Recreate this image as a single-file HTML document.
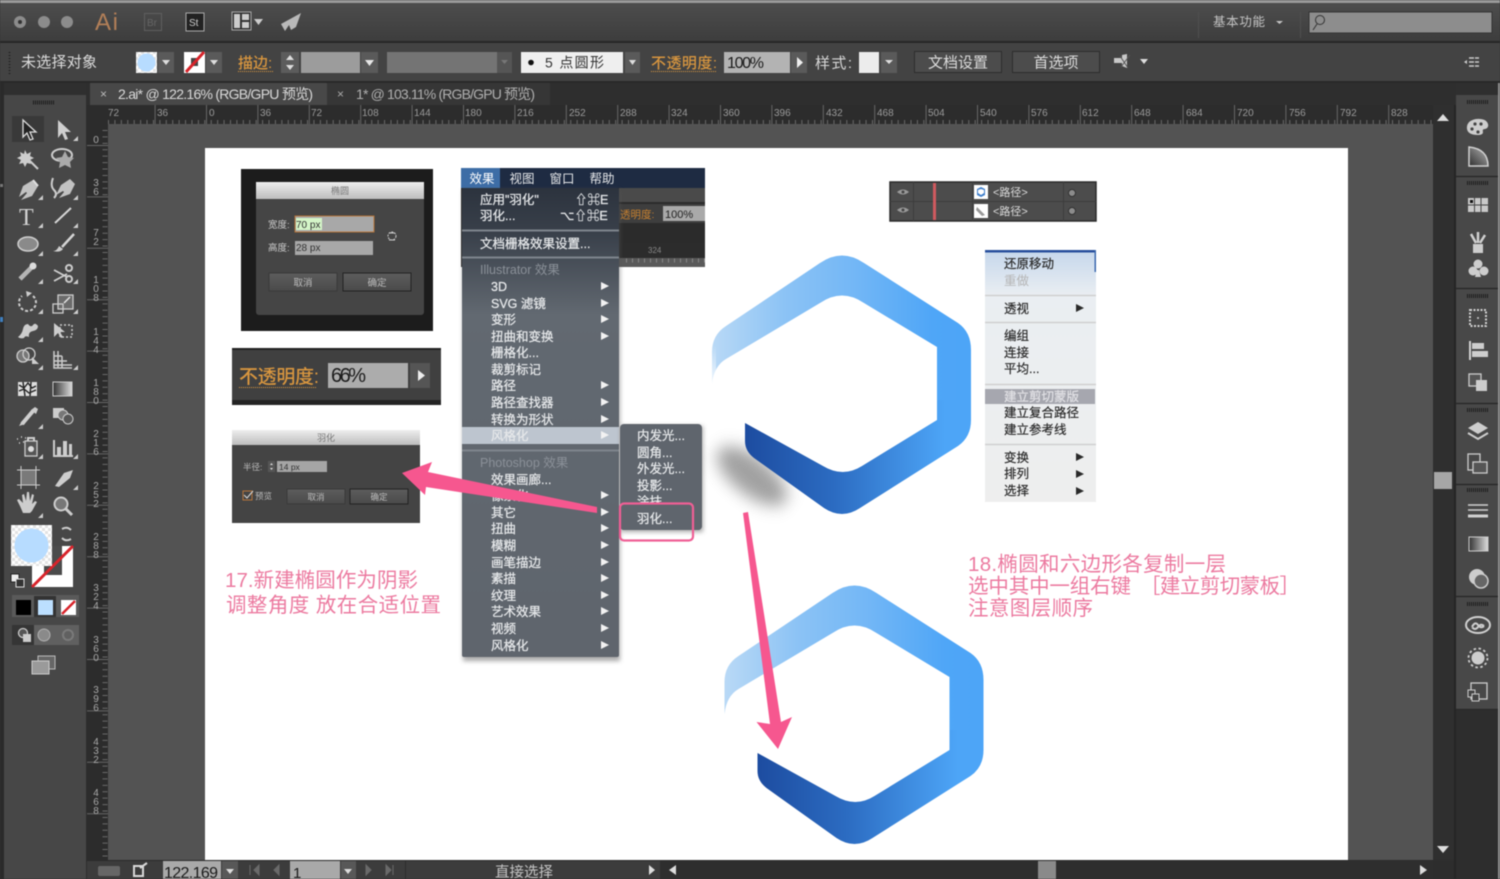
<!DOCTYPE html>
<html lang="zh"><head><meta charset="utf-8"><title>Illustrator</title>
<style>
html,body{margin:0;padding:0;background:#333;overflow:hidden}
svg{display:block;width:1500px;height:879px;filter:blur(.45px)}
text{font-family:"Liberation Sans","Noto Sans CJK SC",sans-serif}
.m{font-size:12.5px;fill:#e6e8ea;stroke:#e6e8ea;stroke-width:.25px}
.c{font-size:12.5px;fill:#2b2b2b;stroke:#2b2b2b;stroke-width:.2px}
.r{font-size:10px;fill:#9a9a9a}
.rv{font-size:10px;fill:#a8a8a8;text-anchor:middle}
.p{font-size:20.5px;fill:#ec7aa0}
.o{fill:#d8963f;font-weight:500}
.i{fill:#cdcdcd}
.s{fill:none;stroke:#cdcdcd;stroke-width:2}
</style></head><body>
<svg xmlns="http://www.w3.org/2000/svg" viewBox="0 0 1500 879" width="1500" height="879">
<defs>
<linearGradient id="top" x1="0" y1="0" x2="0" y2="1"><stop offset="0" stop-color="#4d4d4d"/><stop offset="1" stop-color="#3d3d3d"/></linearGradient>
<linearGradient id="hexA" gradientUnits="userSpaceOnUse" x1="712" y1="0" x2="971" y2="0"><stop offset="0" stop-color="#b9d9f6"/><stop offset=".28" stop-color="#8cc3f5"/><stop offset=".55" stop-color="#73b7f6"/><stop offset=".85" stop-color="#4fa6f7"/><stop offset="1" stop-color="#4da5f7"/></linearGradient>
<linearGradient id="hexB" gradientUnits="userSpaceOnUse" x1="745" y1="0" x2="945" y2="0"><stop offset="0" stop-color="#1d4ca0"/><stop offset=".45" stop-color="#2c6cc2"/><stop offset="1" stop-color="#4da5f7"/></linearGradient>
<linearGradient id="fade" gradientUnits="userSpaceOnUse" x1="0" y1="345" x2="0" y2="395"><stop offset="0" stop-color="#fff" stop-opacity="0"/><stop offset="1" stop-color="#fff"/></linearGradient>
<linearGradient id="menu" x1="0" y1="0" x2="0" y2="1"><stop offset="0" stop-color="#2c333e"/><stop offset=".1" stop-color="#3a414b"/><stop offset=".27" stop-color="#626971"/><stop offset="1" stop-color="#5f656d"/></linearGradient>
<linearGradient id="ctx" x1="0" y1="0" x2="0" y2="1"><stop offset="0" stop-color="#c5d7ec"/><stop offset=".18" stop-color="#eaeef2"/><stop offset="1" stop-color="#eeeeee"/></linearGradient>
<linearGradient id="title" x1="0" y1="0" x2="0" y2="1"><stop offset="0" stop-color="#eeeeee"/><stop offset="1" stop-color="#bdbdbd"/></linearGradient>
<linearGradient id="btn" x1="0" y1="0" x2="0" y2="1"><stop offset="0" stop-color="#5d5d5d"/><stop offset="1" stop-color="#4a4a4a"/></linearGradient>
<linearGradient id="grd" x1="0" y1="0" x2="1" y2="0"><stop offset="0" stop-color="#333"/><stop offset="1" stop-color="#ddd"/></linearGradient>
<linearGradient id="wedge" x1="0" y1="1" x2="1" y2="0"><stop offset="0" stop-color="#2f2f2f"/><stop offset="1" stop-color="#b5b5b5"/></linearGradient>
<filter id="b9" x="-60%" y="-60%" width="220%" height="220%"><feGaussianBlur stdDeviation="8"/></filter>
<filter id="b2" x="-20%" y="-20%" width="140%" height="140%"><feGaussianBlur stdDeviation="2.5"/></filter>
<pattern id="chk" width="6" height="6" patternUnits="userSpaceOnUse"><rect width="6" height="6" fill="#fff"/><rect width="3" height="3" fill="#e2e2e2"/><rect x="3" y="3" width="3" height="3" fill="#e2e2e2"/></pattern>
</defs>

<!-- base -->
<rect width="1500" height="879" fill="#2d2d2d"/>
<rect width="1500" height="3" fill="#9a9a9a"/>
<rect y="3" width="1500" height="38" fill="url(#top)"/>
<rect y="41" width="1500" height="2" fill="#272727"/>
<rect y="43" width="1500" height="38" fill="#434343"/>
<rect y="81" width="1500" height="2" fill="#292929"/>
<rect y="83" width="1500" height="22" fill="#2e2e2e"/>

<!-- title bar -->
<circle cx="20" cy="22" r="6" fill="#8c8c8c"/><circle cx="20" cy="22" r="2" fill="#333"/>
<circle cx="44" cy="22" r="6" fill="#8c8c8c"/><circle cx="67" cy="22" r="6" fill="#8c8c8c"/>
<text x="95" y="30" font-size="24" fill="#b27f58" textLength="23">Ai</text>
<rect x="144.5" y="13.5" width="17" height="17" fill="none" stroke="#5f5f5f"/><text x="147" y="26" font-size="10" fill="#666">Br</text>
<rect x="186" y="13" width="18" height="18" fill="#222" stroke="#aaa"/><text x="189" y="26" font-size="10" fill="#ccc">St</text>
<rect x="232" y="12" width="19" height="18" fill="#333" stroke="#aaa"/><path d="M234 14h6v14h-6zM242 14h7v6h-7zM242 22h7v6h-7z" fill="#ccc"/><path d="M254 19h9l-4.500 6z" fill="#ccc"/>
<path d="M281 24l20-11-5 14-5 3-2-5-4 6z" fill="#b9b9b9"/>
<path d="M1198.5 12v26M1300.5 12v26" stroke="#4f4f4f"/>
<text x="1213" y="26" font-size="12.500" fill="#c4c4c4" textLength="52">基本功能</text><path d="M1276 21h7l-3.500 3z" fill="#c4c4c4"/>
<rect x="1309" y="12" width="183" height="21" fill="#8d8d8d" stroke="#333"/>
<circle cx="1320" cy="20" r="4.500" fill="none" stroke="#333"/><path d="M1317 24l-4 6" stroke="#333"/>

<!-- control bar -->
<path d="M9.5 52v22" stroke="#222" stroke-dasharray="1 2" stroke-width="2"/>
<text x="21" y="67" font-size="15" fill="#dcdcdc" textLength="76">未选择对象</text>
<rect x="136" y="52" width="21" height="21" fill="url(#chk)"/><circle cx="146.5" cy="62.5" r="9" fill="#b7dcff"/>
<rect x="158" y="52" width="16" height="21" fill="#5a5a5a"/><path d="M162 60h8l-4 5z" fill="#ddd"/>
<rect x="184" y="52" width="21" height="21" fill="#fff"/><rect x="191" y="58" width="7" height="8" fill="#444"/><path d="M186 72l18-20" stroke="#d8232a" stroke-width="3"/>
<rect x="206" y="52" width="16" height="21" fill="#5a5a5a"/><path d="M210 60h8l-4 5z" fill="#ddd"/>
<text x="238" y="68" font-size="15" class="o">描边:</text><path d="M238 71.5h35" stroke="#d8963f" stroke-dasharray="1 1"/>
<rect x="281" y="52" width="18" height="21" fill="#5c5c5c"/><path d="M286 60l4-5 4 5zM286 65l4 5 4-5z" fill="#ddd"/>
<rect x="301" y="52" width="59" height="21" fill="#9c9c9c"/>
<rect x="361" y="52" width="17" height="21" fill="#5a5a5a"/><path d="M365 60h9l-4.500 6z" fill="#e6e6e6"/>
<rect x="387" y="52" width="110" height="21" fill="#747474"/><rect x="497" y="52" width="15" height="21" fill="#555"/><path d="M501 60h7l-3.500 4z" fill="#777"/>
<rect x="521" y="52" width="102" height="21" fill="#efefef"/><circle cx="531" cy="62.5" r="2.800" fill="#111"/>
<text x="545" y="67.5" font-size="14" fill="#333" textLength="59">5 点圆形</text>
<rect x="625" y="52" width="15" height="21" fill="#5a5a5a"/><path d="M629 60h7l-3.500 5z" fill="#ddd"/>
<text x="651" y="68" font-size="15" class="o" textLength="66">不透明度:</text><path d="M651 71.5h65" stroke="#d8963f" stroke-dasharray="1 1"/>
<rect x="724" y="52" width="66" height="21" fill="#b3b3b3"/><text x="727" y="68" font-size="16" fill="#1c1c1c" textLength="37">100%</text>
<rect x="791" y="52" width="16" height="21" fill="#5a5a5a"/><path d="M797 57l6 5.500-6 5.500z" fill="#eee"/>
<text x="815" y="68" font-size="15" fill="#d8d8d8" textLength="37">样式:</text>
<rect x="859" y="52" width="20" height="21" fill="#ececec"/>
<rect x="881" y="52" width="16" height="21" fill="#5a5a5a"/><path d="M885 60h8l-4 4z" fill="#ddd"/>
<rect x="914.5" y="51.5" width="87" height="21" fill="#4c4c4c" stroke="#2d2d2d"/><text x="958" y="67.5" font-size="15" fill="#dcdcdc" text-anchor="middle">文档设置</text>
<rect x="1012.5" y="51.5" width="87" height="21" fill="#4c4c4c" stroke="#2d2d2d"/><text x="1056" y="67.5" font-size="15" fill="#dcdcdc" text-anchor="middle">首选项</text>
<path d="M1114 58h8v-3l5 -1v14l-5-2v-3h-8z" fill="#c8c8c8"/><path d="M1120 56l8 12M1130 55l-9 12" stroke="#555"/>
<path d="M1140 59h8l-4 5z" fill="#ddd"/>
<path d="M1469 58h10M1469 62h10M1469 66h10" stroke="#ccc" stroke-width="1.500" stroke-dasharray="5 1"/><path d="M1464 62l3-2v4z" fill="#ccc"/>

<!-- tabs -->
<text x="9" y="92" font-size="10" fill="#bbb">‹‹</text>
<rect x="90" y="83" width="237" height="22" fill="#484848"/>
<rect x="327" y="83" width="223" height="22" fill="#363636"/>
<text x="100" y="98" font-size="12" fill="#bbb">×</text>
<text x="118" y="99" font-size="14" fill="#dadada" textLength="195">2.ai* @ 122.16% (RGB/GPU 预览)</text>
<text x="337" y="98" font-size="12" fill="#aaa">×</text>
<text x="356" y="99" font-size="14" fill="#b0b0b0" textLength="179">1* @ 103.11% (RGB/GPU 预览)</text>
<text x="1483" y="92" font-size="10" fill="#bbb">‹‹</text>

<!-- canvas -->
<rect x="108" y="125" width="1325" height="735" fill="#535353"/>
<rect x="205" y="148" width="1143" height="712" fill="#fff"/>

<!-- horizontal ruler -->
<rect x="87" y="105" width="1346" height="20" fill="#2c2c2c"/>
<path d="M103.2 115H1432" stroke="#666" stroke-width="20" stroke-dasharray="1 50.400"/>
<path d="M108 122.5H1432" stroke="#6a6a6a" stroke-width="5" stroke-dasharray="1 5.420"/>
<rect x="87" y="124" width="1346" height="1" fill="#555"/>
<g class="r">
<text x="108" y="116" class="r">72</text><text x="157" y="116" class="r">36</text><text x="209" y="116" class="r">0</text><text x="260" y="116" class="r">36</text><text x="311" y="116" class="r">72</text><text x="362" y="116" class="r">108</text><text x="414" y="116" class="r">144</text><text x="465" y="116" class="r">180</text><text x="517" y="116" class="r">216</text><text x="569" y="116" class="r">252</text><text x="620" y="116" class="r">288</text><text x="671" y="116" class="r">324</text><text x="723" y="116" class="r">360</text><text x="774" y="116" class="r">396</text><text x="826" y="116" class="r">432</text><text x="877" y="116" class="r">468</text><text x="928" y="116" class="r">504</text><text x="980" y="116" class="r">540</text><text x="1031" y="116" class="r">576</text><text x="1082" y="116" class="r">612</text><text x="1134" y="116" class="r">648</text><text x="1186" y="116" class="r">684</text><text x="1237" y="116" class="r">720</text><text x="1289" y="116" class="r">756</text><text x="1340" y="116" class="r">792</text><text x="1391" y="116" class="r">828</text>
</g>

<!-- vertical ruler -->
<rect x="87" y="105" width="21" height="755" fill="#2c2c2c"/>
<path d="M97.5 145V860" stroke="#666" stroke-width="21" stroke-dasharray="1 50.400"/>
<path d="M105 130V860" stroke="#6a6a6a" stroke-width="5" stroke-dasharray="1 5.420"/>
<text class="rv" x="96" y="143">0</text>
<text class="rv" x="96 96" y="186 195">36</text>
<text class="rv" x="96 96" y="236 245">72</text>
<text class="rv" x="96 96 96" y="283 292 301">108</text>
<text class="rv" x="96 96 96" y="335 344 353">144</text>
<text class="rv" x="96 96 96" y="386 395 404">180</text>
<text class="rv" x="96 96 96" y="437 446 455">216</text>
<text class="rv" x="96 96 96" y="489 498 507">252</text>
<text class="rv" x="96 96 96" y="540 549 558">288</text>
<text class="rv" x="96 96 96" y="591 600 609">324</text>
<text class="rv" x="96 96 96" y="643 652 661">360</text>
<text class="rv" x="96 96 96" y="693 702 711">396</text>
<text class="rv" x="96 96 96" y="745 754 763">432</text>
<text class="rv" x="96 96 96" y="796 805 814">468</text>

<!-- tool panel -->
<rect x="0" y="83" width="4" height="796" fill="#2a2a2a"/>
<rect x="0" y="317" width="3" height="5" fill="#3f7fc0"/>
<rect x="0" y="184" width="3" height="3" fill="#777"/>
<rect x="4" y="95" width="82" height="784" fill="#474747"/>
<rect x="4" y="83" width="82" height="12" fill="#2f2f2f"/>
<path d="M33 102.5h22" stroke="#1d1d1d" stroke-width="4" stroke-dasharray="1 1"/>
<rect x="12" y="116" width="32" height="26" fill="#393939"/>
<!-- flyout triangles -->
<path class="i" d="M73 141l5-5v5zM38 200l5-5v5zM73 200l5-5v5zM38 228l5-5v5zM73 228l5-5v5zM38 256l5-5v5zM73 256l5-5v5zM38 284l5-5v5zM73 284l5-5v5zM38 314l5-5v5zM73 314l5-5v5zM38 342l5-5v5zM38 370l5-5v5zM73 370l5-5v5zM38 429l5-5v5zM38 459l5-5v5zM73 459l5-5v5zM73 490l5-5v5zM38 518l5-5v5z"/>
<!-- selection / direct -->
<path d="M23 120v17l4-4 3 7 3-1-3-7h6z" fill="#222" stroke="#ddd" stroke-width="1.300"/>
<path d="M58 120v18l4-5 3 7 3-1-3-7h6z" fill="#cfcfcf"/>
<!-- wand / lasso -->
<path class="i" d="M25 150l2 4 4-2-1 4 4 2-4 2 1 4-4-1-2 4-2-4-4 1 2-4-4-2 4-2-1-4 4 2z"/><path d="M29 160l9 9" stroke="#cdcdcd" stroke-width="2"/>
<ellipse class="s" cx="62" cy="155" rx="10" ry="6"/><path fill="#aaa" d="M65 151l3 6 6 1-4 4 1 6-6-3-6 3 1-6-4-4 6-1z"/>
<!-- pen / curvature -->
<path fill="#c2c2c2" d="M19 197l4-11 10-6 5 6-6 10-11 4 6-7-1-1z"/><path d="M33 180l5 6" stroke="#e0e0e0" stroke-width="2"/>
<path fill="#c2c2c2" d="M56 195l5-10 9-6 5 5-5 10-11 4 5-6-1-1z"/><path d="M53 178q-3 8 1 12t0 8" class="s" stroke-width="1.500"/>
<!-- type / line -->
<text x="19" y="225" font-size="24" fill="#d2d2d2" style="font-family:'Liberation Serif',serif">T</text>
<path d="M55 223l16-15" stroke="#d5d5d5" stroke-width="2"/>
<!-- ellipse / brush -->
<ellipse cx="28" cy="244" rx="10" ry="7" fill="#8a8a8a" stroke="#d0d0d0" stroke-width="1.500"/>
<path d="M74 234l-12 13" stroke="#d5d5d5" stroke-width="2.500"/><path class="i" d="M53 251q4 0 6-5l4 3q-3 4-10 2z"/>
<!-- pencil / scissors -->
<path d="M33 266l-13 13" stroke="#b5b5b5" stroke-width="4.500"/><circle cx="33" cy="266" r="3.500" fill="#ddd"/>
<path d="M54 270l13 7M54 281l13-7" stroke="#cfcfcf" stroke-width="1.800"/><circle cx="69" cy="268" r="3" class="s" stroke-width="1.500"/><circle cx="69" cy="279" r="3" class="s" stroke-width="1.500"/>
<!-- rotate / scale -->
<path d="M33 296a8.500 8.500 0 1 1-11 0" class="s" stroke-dasharray="3 2"/><path class="i" d="M26 291l6 2-5 4z"/>
<rect x="58" y="295" width="15" height="14" fill="#6b6b6b" stroke="#cdcdcd" stroke-width="1.300"/><rect x="53" y="304" width="10" height="9" fill="none" stroke="#cdcdcd" stroke-width="1.300"/><path d="M64 303l6-6" stroke="#e4e4e4" stroke-width="1.500"/>
<!-- warp / free transform -->
<path d="M18 337q4-3 5-8t5-5q3 4 5 1t5 1q0 4-5 5t-4 6q-4-2-5 1-4 1-6-1z" class="i"/>
<path d="M54 323v14l4-4 3 5 2-1-3-5h5z" class="i"/><rect x="60" y="325" width="12" height="12" fill="none" stroke="#cdcdcd" stroke-dasharray="2 2" stroke-width="1.500"/>
<!-- builder / perspective -->
<circle cx="23" cy="356" r="6" fill="#777" stroke="#ccc" stroke-width="1.300"/><circle cx="29" cy="354" r="6" fill="none" stroke="#ccc" stroke-width="1.300"/><path class="i" d="M32 357l7 7h-7z"/>
<path d="M54 351v17h18M58 351v17M62 356v12M54 356h8M54 361h13M54 365h18" stroke="#cdcdcd" stroke-width="1.500" fill="none"/>
<!-- mesh / gradient -->
<rect x="18" y="382" width="19" height="14" fill="#ddd"/><path d="M19 385l5 3 4-5 4 5 4-2M19 391l5-2 5 4 7-3M23 382l2 14M31 382l-1 14" stroke="#222" stroke-width="1.400" fill="none"/>
<rect x="53" y="382" width="19" height="14" fill="url(#grd)" stroke="#ccc"/>
<!-- eyedropper / blend -->
<path d="M22 424l11-13" stroke="#cfcfcf" stroke-width="4"/><path d="M19 426l3-5 3 3z" class="i"/><path d="M31 410l5 4 2-5-3-2z" class="i"/>
<rect x="53" y="408" width="11" height="10" class="i"/><circle cx="63" cy="415" r="5" fill="#777" stroke="#ccc"/><circle cx="68" cy="419" r="5" fill="#555" stroke="#ccc"/>
<!-- spray / graph -->
<rect x="25" y="441" width="12" height="15" fill="#555" stroke="#ccc" stroke-width="1.300"/><circle cx="31" cy="449" r="3" fill="#ddd"/><path d="M28 441v-3h6v3" class="s" stroke-width="1.300"/><path d="M17 439h1M21 437h1M25 438h1M19 443h1M23 442h1" stroke="#ddd" stroke-width="1.500"/>
<path d="M54 440v16h19" class="s" stroke-width="1.300"/><rect x="57" y="447" width="4" height="8" class="i"/><rect x="63" y="441" width="4" height="14" class="i"/><rect x="69" y="444" width="3" height="11" class="i"/>
<!-- artboard / slice -->
<rect x="21" y="470" width="15" height="15" fill="#7a7a7a" stroke="#ccc"/><path d="M21 466v4M36 466v4M21 485v4M36 485v4M17 470h4M36 470h4M17 485h4M36 485h4" stroke="#ccc"/>
<path d="M55 486l9-13 9-3-3 8-11 9z" class="i"/>
<!-- hand / zoom -->
<path class="i" d="M20 506l-3-6 2-1 4 4-1-8 2-1 2 7 1-9 2 0 1 9 2-7 2 1-2 9 3-3 2 1-5 9-2 2h-7z"/>
<circle cx="61" cy="504" r="6.500" fill="#777" stroke="#cdcdcd" stroke-width="2"/><path d="M66 509l6 6" stroke="#cdcdcd" stroke-width="3"/>
<!-- colors -->
<rect x="32" y="546" width="41" height="41" fill="#fff"/><rect x="44" y="546" width="18" height="29" fill="#4b4b4b"/>
<path d="M32 587l41-41" stroke="#d8232a" stroke-width="3"/>
<rect x="11" y="525" width="41" height="41" fill="url(#chk)"/><circle cx="31.5" cy="545.5" r="17" fill="#b7dcff"/>
<path d="M62 529q5-3 9 1M71 539q-5 3-9-1" class="s" stroke-width="1.600"/>
<rect x="11" y="574" width="8" height="8" fill="#eee" stroke="#222"/><rect x="16" y="579" width="8" height="8" fill="#333" stroke="#ddd"/>
<rect x="12" y="595" width="67" height="22" fill="#5a5a5a"/>
<rect x="16" y="600" width="15" height="15" fill="#000"/>
<rect x="34" y="596" width="22" height="21" fill="#333"/>
<rect x="38" y="600" width="15" height="15" fill="#bcdfff"/>
<rect x="61" y="600" width="15" height="15" fill="#fff"/><path d="M62 614l13-13" stroke="#d8232a" stroke-width="2.500"/>
<rect x="12" y="625" width="67" height="20" fill="#606060"/><rect x="12" y="625" width="22" height="20" fill="#353535"/>
<circle cx="23" cy="633" r="4.500" fill="#555" stroke="#ccc" stroke-width="1.300"/><rect x="23" y="634" width="8" height="8" fill="#ccc"/>
<circle cx="44" cy="635" r="6" fill="#8a8a8a" stroke="#b0b0b0"/><circle cx="68" cy="635" r="5" fill="none" stroke="#7a7a7a" stroke-width="2"/>
<rect x="38" y="656" width="17" height="13" fill="#666" stroke="#bbb"/><rect x="32" y="661" width="17" height="13" fill="#9a9a9a" stroke="#ccc"/>

<!-- right scroll + panel -->
<rect x="1433" y="105" width="21" height="755" fill="#2f2f2f"/>
<rect x="1454" y="105" width="2" height="774" fill="#252525"/>
<path d="M1437 121l6-7 6 7z" fill="#ddd"/>
<path d="M1437 846l6 7 6-7z" fill="#ddd"/>
<rect x="1434" y="472" width="18" height="17" fill="#a6a6a6"/>
<rect x="1456" y="83" width="44" height="12" fill="#2f2f2f"/>
<rect x="1456" y="95" width="42" height="615" fill="#484848"/>
<rect x="1498" y="83" width="2" height="796" fill="#8e8e8e"/>
<path d="M1456 176.5h42M1456 288.5h42M1456 403.5h42M1456 484.5h42M1456 596.5h42M1456 709.5h42" stroke="#2a2a2a" stroke-width="1.500"/>
<path d="M1467 102h22M1467 183h22M1467 296h22M1467 410h22M1467 490h22M1467 604h22" stroke="#1d1d1d" stroke-width="4" stroke-dasharray="1 1"/>
<!-- palette -->
<path class="i" d="M1467 129q-1-8 9-10 10-1 12 5 1 4-3 5-3 0-2 3 0 3-5 3-10 0-11-6z"/><circle cx="1475" cy="124" r="1.600" fill="#444"/><circle cx="1481" cy="124" r="1.600" fill="#444"/><circle cx="1472" cy="129" r="1.600" fill="#444"/><circle cx="1478" cy="132" r="1.600" fill="#444"/>
<!-- gradient wedge -->
<path d="M1469 147v19h19q0-17-19-19z" fill="url(#wedge)" stroke="#d0d0d0" stroke-width="1.500"/>
<!-- swatches -->
<rect x="1468" y="198" width="20" height="14" fill="#c9c9c9"/><path d="M1468 205h20M1474.5 198v14M1481 198v14" stroke="#444"/><rect x="1470" y="200" width="3" height="3" fill="#111"/>
<!-- brushes -->
<path d="M1473 244h10v9h-10z" class="i"/><path d="M1476 243l-5-9M1478 243v-11M1480 243l5-8" stroke="#d0d0d0" stroke-width="2.500"/>
<!-- club -->
<circle cx="1478" cy="264" r="4.500" class="i"/><circle cx="1473" cy="271" r="4.500" class="i"/><circle cx="1484" cy="271" r="4.500" class="i"/><path class="i" d="M1477 270h2l2 7h-6z"/>
<!-- transform -->
<rect x="1470" y="310" width="16" height="16" fill="none" stroke="#d0d0d0" stroke-dasharray="2 1.500" stroke-width="2"/><circle cx="1478" cy="318" r="1" fill="#ccc"/>
<!-- align -->
<path d="M1470 341v19" stroke="#d0d0d0" stroke-width="2"/><rect x="1472" y="343" width="12" height="6" class="i"/><rect x="1472" y="351" width="16" height="6" class="i"/>
<!-- pathfinder -->
<rect x="1469" y="374" width="12" height="12" fill="#555" stroke="#ccc" stroke-width="1.300"/><rect x="1476" y="380" width="11" height="11" class="i"/>
<!-- layers -->
<path d="M1478 422l10 6-10 6-10-6z" class="i"/><path d="M1468 433l10 6 10-6" class="s"/>
<!-- artboards -->
<rect x="1468" y="454" width="12" height="16" fill="none" stroke="#ccc" stroke-width="1.300"/><rect x="1473" y="462" width="14" height="11" fill="#555" stroke="#ccc" stroke-width="1.300"/>
<!-- lines -->
<path d="M1468 505h20M1468 510h20" stroke="#d0d0d0" stroke-width="1.500"/><path d="M1468 516h20" stroke="#d0d0d0" stroke-width="3"/>
<rect x="1469" y="537" width="19" height="14" fill="url(#grd)" stroke="#ccc"/>
<circle cx="1477" cy="577" r="8" class="i"/><circle cx="1481" cy="581" r="7" fill="#666" stroke="#ccc" stroke-width="1.500"/>
<!-- cc -->
<ellipse cx="1478" cy="625" rx="12" ry="8" fill="none" stroke="#d0d0d0" stroke-width="2"/><path d="M1472 627q3-6 6-2t6 1M1472 627q3 4 6 0t6-1" class="s" stroke-width="1.500"/>
<circle cx="1478" cy="658" r="6.500" class="i"/><circle cx="1478" cy="658" r="9.500" fill="none" stroke="#ccc" stroke-width="1.800" stroke-dasharray="2.500 2.500"/>
<rect x="1471" y="683" width="16" height="16" fill="none" stroke="#ccc" stroke-width="1.300"/><rect x="1468" y="690" width="7" height="7" fill="#444" stroke="#ccc"/><rect x="1472" y="694" width="7" height="7" fill="#444" stroke="#ccc"/>

<!-- status bar -->
<rect x="87" y="860" width="1346" height="19" fill="#3c3c3c"/>
<rect x="87" y="860" width="1346" height="1" fill="#2a2a2a"/>
<rect x="98" y="866" width="22" height="10" rx="2" fill="#666"/>
<path d="M134 866h9v10h-9zM140 868l7-5" fill="none" stroke="#d8d8d8" stroke-width="2"/>
<rect x="163" y="861" width="58" height="18" fill="#a9a9a9"/><text x="164" y="878" font-size="16" fill="#1a1a1a" textLength="54">122.169</text>
<rect x="222" y="861" width="16" height="18" fill="#585858"/><path d="M226 869h8l-4 5z" fill="#ddd"/>
<path d="M250 865v10M259 865l-5 5 5 5zM279 865l-5 5 5 5zM366 865l5 5-5 5zM386 865l5 5-5 5zM393 865v10" fill="#6a6a6a" stroke="#6a6a6a"/>
<rect x="290" y="861" width="50" height="18" fill="#a9a9a9"/><text x="293" y="878" font-size="15" fill="#1a1a1a">1</text>
<rect x="341" y="861" width="15" height="18" fill="#585858"/><path d="M344 869h8l-4 5z" fill="#ddd"/>
<path d="M405.5 861v18" stroke="#2c2c2c"/>
<text x="524" y="877" font-size="14.500" fill="#c4c4c4" text-anchor="middle">直接选择</text>
<path d="M649 865l6 5-6 5z" fill="#ddd"/>
<rect x="660" y="861" width="773" height="18" fill="#2e2e2e"/>
<path d="M676 865l-7 5 7 5z" fill="#ddd"/>
<rect x="1038" y="861" width="18" height="18" fill="#8a8a8a"/>
<path d="M1420 865l7 5-7 5z" fill="#ddd"/>

<!-- inset 1: ellipse dialog -->
<rect x="241" y="169" width="192" height="162" fill="#1c1c1c"/>
<rect x="256" y="182" width="168" height="133" rx="3" fill="#454545"/>
<rect x="256" y="182" width="168" height="17" fill="url(#title)"/>
<text x="340" y="194" font-size="9" fill="#777" text-anchor="middle">椭圆</text>
<text x="268" y="228" font-size="9.500" fill="#ccc">宽度:</text>
<rect x="295" y="216" width="79" height="16" fill="#a8a8a8" stroke="#b5743a"/><rect x="296" y="218" width="26" height="12" fill="#d4f5c8"/>
<text x="296" y="228" font-size="10" fill="#333">70 px</text>
<text x="268" y="251" font-size="9.500" fill="#ccc">高度:</text>
<rect x="295" y="241" width="78" height="14" fill="#a8a8a8"/><text x="296" y="251" font-size="10" fill="#333">28 px</text>
<path d="M389 233h6M389 240h6" stroke="#ccc"/><circle cx="392" cy="236" r="4" fill="none" stroke="#ccc" stroke-dasharray="2 1"/>
<rect x="269" y="273" width="68" height="18" fill="url(#btn)" stroke="#3a3a3a"/><text x="303" y="286" font-size="9.500" fill="#bbb" text-anchor="middle">取消</text>
<rect x="343" y="273" width="68" height="18" fill="url(#btn)" stroke="#222"/><text x="377" y="286" font-size="9.500" fill="#bbb" text-anchor="middle">确定</text>

<!-- inset 2: opacity -->
<rect x="232" y="348" width="209" height="57" fill="#404040"/>
<rect x="232" y="348" width="209" height="2" fill="#222"/><rect x="232" y="400" width="209" height="5" fill="#242424"/>
<text x="239" y="383" font-size="19" class="o" textLength="80">不透明度:</text><path d="M239 387.5h78" stroke="#d8963f" stroke-dasharray="1 1"/>
<rect x="328" y="363" width="80" height="25" fill="#acacac"/><text x="331" y="382" font-size="20" fill="#1c1c1c" textLength="35">66%</text>
<rect x="410" y="363" width="20" height="25" fill="#555"/><path d="M418 370l7 5.500-7 5.500z" fill="#eee"/>

<!-- inset 3: feather -->
<rect x="232" y="430" width="188" height="93" fill="#444"/>
<rect x="232" y="430" width="188" height="15" fill="url(#title)"/>
<text x="326" y="441" font-size="9" fill="#777" text-anchor="middle">羽化</text>
<text x="243" y="470" font-size="8.500" fill="#bbb">半径:</text>
<rect x="268" y="461" width="7" height="11" fill="#555"/><path d="M270 465l1.500-2 1.500 2zM270 468l1.500 2 1.500-2z" fill="#ddd"/>
<rect x="277" y="461" width="50" height="11" fill="#a5a5a5"/><text x="279" y="470" font-size="8.500" fill="#333">14 px</text>
<rect x="243" y="491" width="9" height="9" fill="none" stroke="#b5743a"/><path d="M244 495l3 3 6-7" stroke="#ddd" fill="none"/>
<text x="255" y="499" font-size="8.500" fill="#bbb">预览</text>
<rect x="287" y="489" width="58" height="15" fill="url(#btn)" stroke="#3a3a3a"/><text x="316" y="500" font-size="8.500" fill="#bbb" text-anchor="middle">取消</text>
<rect x="350" y="489" width="58" height="15" fill="url(#btn)" stroke="#222"/><text x="379" y="500" font-size="8.500" fill="#bbb" text-anchor="middle">确定</text>

<!-- inset 4: menu -->
<rect x="461" y="168" width="244" height="99" fill="#2b2b2b"/>
<rect x="619" y="188" width="86" height="14" fill="#4a4a4a"/>
<rect x="619" y="204" width="86" height="19" fill="#3e3e3e"/>
<text x="620" y="218" font-size="10.500" fill="#c9812f">透明度:</text>
<rect x="663" y="206" width="42" height="15" fill="#a9a9a9"/><text x="665" y="218" font-size="11" fill="#222">100%</text>
<rect x="619" y="243" width="86" height="15" fill="#2c2c2c"/><text x="648" y="253" font-size="8" fill="#888">324</text>
<rect x="619" y="258" width="86" height="9" fill="#5a5a5a"/>
<path d="M626 260.5h79" stroke="#888" stroke-width="4" stroke-dasharray="1 5"/>
<rect x="461" y="168" width="244" height="20" fill="#1e2b42"/>
<rect x="461" y="168" width="39" height="20" fill="#3d6da6"/>
<text x="482" y="183" font-size="12.500" fill="#fff" text-anchor="middle">效果</text>
<text x="522" y="183" font-size="12.500" fill="#e4e6e8" text-anchor="middle">视图</text>
<text x="562" y="183" font-size="12.500" fill="#e4e6e8" text-anchor="middle">窗口</text>
<text x="602" y="183" font-size="12.500" fill="#e4e6e8" text-anchor="middle">帮助</text>
<rect x="463" y="190" width="157" height="471" fill="#555" opacity=".5" filter="url(#b2)"/>
<rect x="462" y="188" width="157" height="469" rx="2" fill="url(#menu)"/>
<rect x="462" y="427" width="157" height="17" fill="#bdc5cf"/>
<path d="M462 230.5h157M462 257.5h157M462 450.5h157" stroke="#7e858d" stroke-width="2"/>
<text class="m" x="480" y="204">应用"羽化"</text><text class="m" x="575" y="204">⇧⌘E</text>
<text class="m" x="480" y="220">羽化...</text><text class="m" x="560" y="220">⌥⇧⌘E</text>
<text class="m" x="480" y="248">文档栅格效果设置...</text>
<text x="480" y="274" font-size="12.500" fill="#8a9098">Illustrator 效果</text>
<text class="m" x="491" y="291">3D</text>
<text class="m" x="491" y="308">SVG 滤镜</text>
<text class="m" x="491" y="324">变形</text>
<text class="m" x="491" y="341">扭曲和变换</text>
<text class="m" x="491" y="357">栅格化...</text>
<text class="m" x="491" y="374">裁剪标记</text>
<text class="m" x="491" y="390">路径</text>
<text class="m" x="491" y="407">路径查找器</text>
<text class="m" x="491" y="424">转换为形状</text>
<text class="m" x="491" y="440">风格化</text>
<text x="480" y="467" font-size="12.500" fill="#8a9098">Photoshop 效果</text>
<text class="m" x="491" y="484">效果画廊...</text>
<text class="m" x="491" y="500">像素化</text>
<text class="m" x="491" y="517">其它</text>
<text class="m" x="491" y="533">扭曲</text>
<text class="m" x="491" y="550">模糊</text>
<text class="m" x="491" y="567">画笔描边</text>
<text class="m" x="491" y="583">素描</text>
<text class="m" x="491" y="600">纹理</text>
<text class="m" x="491" y="616">艺术效果</text>
<text class="m" x="491" y="633">视频</text>
<text class="m" x="491" y="650">风格化</text>
<path fill="#f2f2f2" d="M601 282l8 4-8 4zM601 299l8 4-8 4zM601 315l8 4-8 4zM601 332l8 4-8 4zM601 381l8 4-8 4zM601 398l8 4-8 4zM601 415l8 4-8 4zM601 431l8 4-8 4zM601 491l8 4-8 4zM601 508l8 4-8 4zM601 524l8 4-8 4zM601 541l8 4-8 4zM601 558l8 4-8 4zM601 574l8 4-8 4zM601 591l8 4-8 4zM601 607l8 4-8 4zM601 624l8 4-8 4zM601 641l8 4-8 4z"/>
<!-- submenu -->
<rect x="621" y="426" width="82" height="106" fill="#555" opacity=".5" filter="url(#b2)"/>
<rect x="620" y="424" width="82" height="106" rx="4" fill="#5f656d"/>
<text class="m" x="637" y="440">内发光...</text>
<text class="m" x="637" y="457">圆角...</text>
<text class="m" x="637" y="473">外发光...</text>
<text class="m" x="637" y="490">投影...</text>
<text class="m" x="637" y="506">涂抹</text>
<rect x="620" y="504" width="82" height="26" rx="4" fill="#5f656d"/>
<text class="m" x="637" y="523">羽化...</text>
<rect x="620" y="503.5" width="73" height="37" rx="4" fill="none" stroke="#ef5f95" stroke-width="2.200"/>

<!-- layers strip -->
<rect x="890" y="182" width="206" height="39" fill="#4c4c4c" stroke="#2a2a2a" stroke-width="1.500"/>
<path d="M890 201.5h206M913.5 182v39M972.5 182v39M1063.5 182v39" stroke="#3c3c3c"/>
<path d="M897 192q6-5 12 0-6 5-12 0zM897 210q6-5 12 0-6 5-12 0z" fill="#999"/><circle cx="903" cy="192" r="1.500" fill="#444"/><circle cx="903" cy="210" r="1.500" fill="#444"/>
<rect x="933" y="183" width="3" height="37" fill="#cf5a5f"/>
<rect x="974" y="185" width="14" height="14" fill="#fff"/><path d="M977 189l4-2 4 2v6l-4 2-4-2z" fill="#3f7fcb"/><path d="M978 190l3-1 3 1v3l-3 2-3-2z" fill="#fff"/>
<rect x="974" y="204" width="14" height="14" fill="#fff"/><path d="M977 207l8 8-3 1-6-6z" fill="#999"/>
<text x="993" y="196" font-size="11" fill="#dcdcdc">&lt;路径&gt;</text>
<text x="993" y="215" font-size="11" fill="#dcdcdc">&lt;路径&gt;</text>
<circle cx="1072" cy="193" r="3.500" fill="#8c8c8c" stroke="#333"/><circle cx="1072" cy="211" r="3.500" fill="#8c8c8c" stroke="#333"/>

<!-- context menu -->
<rect x="985" y="250" width="111" height="252" fill="url(#ctx)"/>
<rect x="985" y="250" width="111" height="2.500" fill="#274f9c"/>
<rect x="1094.5" y="250" width="1.500" height="22" fill="#3a68ae"/>
<path d="M985 295.5h111M985 322.500h111M985 384.500h111M985 444.500h111" stroke="#d0d0d0" stroke-width="1.500"/>
<rect x="985" y="389" width="110" height="15" fill="#a6a7af"/>
<text class="c" x="1004" y="268">还原移动</text>
<text x="1004" y="285" font-size="12.500" fill="#b5b5b5">重做</text>
<text class="c" x="1004" y="313">透视</text>
<text class="c" x="1004" y="340">编组</text>
<text class="c" x="1004" y="357">连接</text>
<text class="c" x="1004" y="373">平均...</text>
<text x="1004" y="401" font-size="12.500" fill="#e2e2e6" stroke="#e2e2e6" stroke-width=".2">建立剪切蒙版</text>
<text class="c" x="1004" y="417">建立复合路径</text>
<text class="c" x="1004" y="434">建立参考线</text>
<text class="c" x="1004" y="462">变换</text>
<text class="c" x="1004" y="478">排列</text>
<text class="c" x="1004" y="495">选择</text>
<path fill="#2a2a2a" d="M1076 304l8 4-8 4zM1076 453l8 4-8 4zM1076 470l8 4-8 4zM1076 487l8 4-8 4z"/>

<!-- shadow -->
<ellipse cx="752" cy="476" rx="42" ry="19" transform="rotate(38 752 476)" fill="#8a8a8a" opacity=".8" filter="url(#b9)"/>

<!-- hexagon 1 -->
<g>
<path d="M745 423L745 441Q745 451 754 458L824 508Q842 520 860 508L958 446Q971 437 971 420L971 395L937 395L937 420L862 466Q843 478 823 466Z" fill="url(#hexB)"/>
<path d="M712 390L712 352Q712 335 726 326L820 263Q842 248 864 263L958 323Q971 332 971 350L971 400L937 400L937 347L864 303Q842 288 820 303L726 359Q714 366 712 384Z" fill="url(#hexA)"/>
<path d="M712 345L712 392L716 392L716 345Z" fill="url(#fade)"/>
</g>
<!-- hexagon 2 -->
<g transform="translate(12.5 330)">
<path d="M745 423L745 441Q745 451 754 458L824 508Q842 520 860 508L958 446Q971 437 971 420L971 395L937 395L937 420L862 466Q843 478 823 466Z" fill="url(#hexB)"/>
<path d="M712 390L712 352Q712 335 726 326L820 263Q842 248 864 263L958 323Q971 332 971 350L971 400L937 400L937 347L864 303Q842 288 820 303L726 359Q714 366 712 384Z" fill="url(#hexA)"/>
</g>

<!-- arrows -->
<path d="M402 473L432 462L428 472L597 507L597 513L426 487L425 495Z" fill="#f6578f"/>
<path d="M743 513L748 512L781 722L792 717L778 749L756.5 722L770 724Z" fill="#f6578f"/>

<!-- pink notes -->
<text class="p" x="225" y="587" textLength="193">17.新建椭圆作为阴影</text>
<text class="p" x="226" y="612" textLength="215">调整角度 放在合适位置</text>
<text class="p" x="968" y="571" textLength="258">18.椭圆和六边形各复制一层</text>
<text class="p" x="968" y="593" textLength="163">选中其中一组右键</text>
<text class="p" x="1140" y="593" textLength="160">［建立剪切蒙板］</text>
<text class="p" x="968" y="615" textLength="125">注意图层顺序</text>
</svg>
</body></html>
